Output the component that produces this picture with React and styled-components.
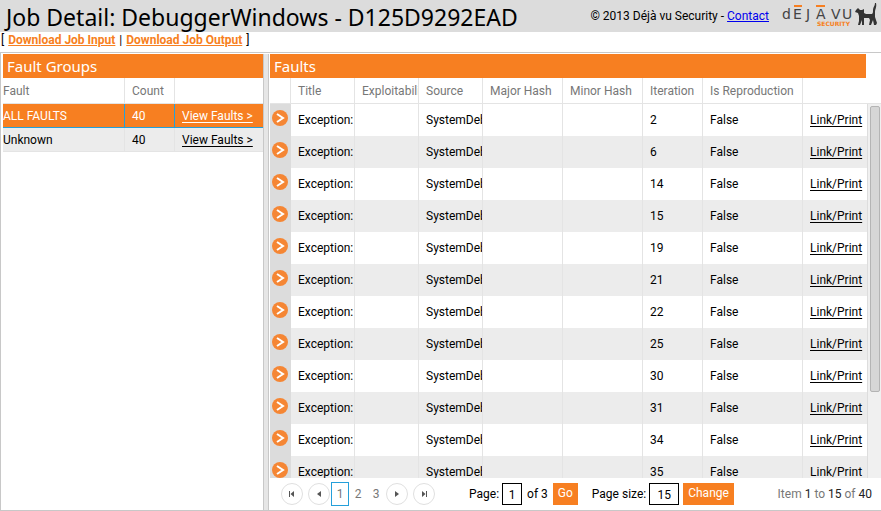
import React from "react";
import styled, { createGlobalStyle, css } from "styled-components";

const Global = createGlobalStyle`
  * { box-sizing: border-box; }
  body { margin: 0; background: #fff; color: #000; font: 12px/16px Roboto, "Open Sans", sans-serif; }
  button, input { font: inherit; }
`;
const orange = "#f77f21";
const display = `"Noto Sans", "Open Sans", sans-serif`;

const Page = styled.div`display: flex; flex-direction: column; height: 100vh; overflow: hidden;`;
const Header = styled.header`
  display: flex; align-items: center; justify-content: space-between;
  flex: none; height: 32px; padding: 0 4px 0 6px; background: #dcdcdc; white-space: nowrap;
`;
const Heading = styled.h1`margin: 0; padding-top: 2px; font-family: ${display}; font-size: 23px; line-height: 30px; font-weight: 400;`;
const Brand = styled.div`display: flex; align-items: center; gap: 12px;`;
const Contact = styled.a`color: #00e;`;
const Downloads = styled.nav`flex: none; height: 20px; padding: 0 1px; line-height: 16px;`;
const Download = styled.a`color: ${orange}; font-weight: 700; margin: 0 1px;`;
const Split = styled.main`
  display: flex; flex: 1; min-height: 0; border: 1px solid #c8c8c8; border-width: 1px 0 1px 1px; padding: 1px 0 0 2px;
`;
const Groups = styled.section`flex: none; width: 260px;`;
const Bar = styled.div`flex: none; width: 6px; background: #e6e6e6; border: 1px solid #c8c8c8; border-width: 0 1px;`;
const Faults = styled.section`display: flex; flex-direction: column; flex: 1; min-width: 0; padding-left: 1px;`;
const PanelTitle = styled.h2`
  flex: none; margin: 0 ${p => p.$inset || 0}px 0 0; padding: 0 4px; height: 24px;
  background: ${orange}; color: #fff; font-family: ${display}; font-size: 15px; line-height: 24px; font-weight: 400;
`;
const Table = styled.table`
  width: 100%; table-layout: fixed; border-collapse: separate; border-spacing: 0;
  th, td { overflow: hidden; white-space: nowrap; text-align: left; font-weight: 400; border-right: 1px solid #e4e4e4; padding: 0 0 0 7px; }
  th { height: 26px; color: #777; border-bottom: 1px solid #e4e4e4; }
  th:last-child, td:last-child { border-right: 0; }
`;
const GroupTable = styled(Table)`
  th:first-child, td:first-child { padding-left: 0; }
`;
const GroupRow = styled.tr`
  td { height: 24px; background: #ececec; border-bottom: 1px solid #e4e4e4; }
  ${p => p.$selected && css`td { background: ${orange}; color: #fff; border-color: #25a0da; }`}
`;
const FaultRow = styled.tr`
  background: ${p => (p.$alt ? "#ececec" : "#fff")};
  td { height: 32px; }
  td:first-child { background: #dcdcdc; padding: 0 0 0 2px; border-right: 0; }
`;
const RowLink = styled.a`color: inherit; text-underline-offset: 2px;`;
const Expand = styled.button`display: block; width: 16px; height: 16px; margin-bottom: 4px; padding: 0; border: 0; background: none;`;
const Scroller = styled.div`display: flex; flex: 1; min-height: 0; overflow: hidden;`;
const Rows = styled.div`flex: 1; min-width: 0;`;
const Track = styled.div`flex: none; width: 14px; padding: 2px 1px 0 2px; background: #f0f0f0; border-left: 1px solid #ddd;`;
const Thumb = styled.div`height: 77%; background: #d6d6d6; border: 1px solid #b4b4b4; border-radius: 2px;`;
const Pager = styled.footer`
  display: flex; align-items: center; gap: 34px; flex: none; height: 32px;
  padding: 0 9px 0 11px; white-space: nowrap;
`;
const Cluster = styled.div`display: flex; align-items: center; gap: ${p => p.$gap || 0}px;`;
const Round = styled.button`
  display: grid; place-items: center; width: 22px; height: 22px; padding: 0;
  border: 1px solid #e0e0e0; border-radius: 50%; background: #fff;
`;
const PageLink = styled.button`
  width: 18px; height: 24px; padding: 0; background: #fff; color: #777;
  border: 1px solid ${p => (p.$current ? "#25a0da" : "transparent")};
`;
const Field = styled.label`display: flex; align-items: center; gap: 3px;`;
const Box = styled.input`
  width: ${p => p.$w}px; height: 22px; padding: 2px 0 0; border: 1px solid #000; border-radius: 0;
  background: #fff; color: #000; text-align: center; outline: 0;
`;
const Action = styled.button`height: 22px; padding: 0 5px 2px; border: 0; background: ${orange}; color: #fff;`;
const Summary = styled.div`margin-left: auto; color: #777; b { color: #222; font-weight: 400; }`;

const Logo = () => (
  <svg width="96" height="28" viewBox="0 0 96 28" role="img" aria-label="Déjà vu Security">
    <text y="17" x="1 12 25 35 50 61" fill="#444" fontFamily="DejaVu Sans" fontSize="14">dEJAVU</text>
    <path d="M13 4h8M35 4h9" stroke={orange} strokeWidth="2" />
    <text y="24" x="36" fill={orange} fontFamily="DejaVu Sans" fontWeight="700" fontSize="6">SECURITY</text>
    <path fill="#333" d="M77 6l2 2h2l2-1v4l2 1h6c1-1 1-2 1-4 0-3 2-4 2-7h1c1 4-1 6-1 9v5l2 6-1 2h-2l-1-5-2 5h-2l1-5-1-2h-5v7h-2v-5l-2 5h-2l1-4v-5l-1-3-3-1 1-2z" />
  </svg>
);
const Arrow = () => (
  <svg width="16" height="16" viewBox="0 0 16 16"><circle cx="8" cy="8" r="8" fill="#f58634" /><path d="M5 4l6 4-6 4" fill="none" stroke="#fff" strokeWidth="2" /></svg>
);
const marks = {
  first: "M3 3h1v6H3zM8 3v6L4.500 6z", prev: "M8 3v6L4 6z", next: "M4 3v6l4-3z", last: "M4 3v6l3.500-3zM8 3h1v6H8z",
};
const Nav = ({ kind, label }) => (
  <Round aria-label={label}><svg width="12" height="12" viewBox="0 0 12 12"><path fill="#555" d={marks[kind]} /></svg></Round>
);
const Cols = ({ widths }) => <colgroup>{widths.map((w, i) => <col key={i} style={{ width: w }} />)}</colgroup>;

const faultCols = [21, 64, 64, 64, 80, 80, 60, 100, undefined];
const headers = ["", "Title", "Exploitability", "Source", "Major Hash", "Minor Hash", "Iteration", "Is Reproduction", ""];
const iterations = [2, 6, 14, 15, 19, 21, 22, 25, 30, 31, 34, 35];

export default function App() {
  return (
    <Page>
      <Global />
      <Header>
        <Heading>Job Detail: DebuggerWindows - D125D9292EAD</Heading>
        <Brand><span>© 2013 Déjà vu Security - <Contact href="#contact">Contact</Contact></span><Logo /></Brand>
      </Header>
      <Downloads>[ <Download href="#input">Download Job Input</Download> | <Download href="#output">Download Job Output</Download> ]</Downloads>
      <Split>
        <Groups>
          <PanelTitle>Fault Groups</PanelTitle>
          <GroupTable>
            <Cols widths={[122, 50, undefined]} />
            <thead><tr><th>Fault</th><th>Count</th><th /></tr></thead>
            <tbody>
              {["ALL FAULTS", "Unknown"].map((name, i) => (
                <GroupRow key={name} $selected={i === 0}><td>{name}</td><td>40</td><td><RowLink href="#faults">View Faults &gt;</RowLink></td></GroupRow>
              ))}
            </tbody>
          </GroupTable>
        </Groups>
        <Bar />
        <Faults>
          <PanelTitle $inset={15}>Faults</PanelTitle>
          <Table>
            <Cols widths={faultCols} />
            <thead><tr>{headers.map((h, i) => <th key={i}>{h}</th>)}</tr></thead>
          </Table>
          <Scroller>
            <Rows>
              <Table>
                <Cols widths={faultCols} />
                <tbody>
                  {iterations.map((n, i) => (
                    <FaultRow key={n} $alt={i % 2 === 1}>
                      <td><Expand aria-label="Expand fault"><Arrow /></Expand></td>
                      <td>Exception:</td><td /><td>SystemDebugger</td><td /><td /><td>{n}</td><td>False</td>
                      <td><RowLink href="#fault">Link/Print</RowLink></td>
                    </FaultRow>
                  ))}
                </tbody>
              </Table>
            </Rows>
            <Track><Thumb /></Track>
          </Scroller>
          <Pager>
            <Cluster $gap={1}>
              <Cluster $gap={5}><Nav kind="first" label="First page" /><Nav kind="prev" label="Previous page" /></Cluster>
              <Cluster><PageLink $current>1</PageLink><PageLink>2</PageLink><PageLink>3</PageLink></Cluster>
              <Cluster $gap={5}><Nav kind="next" label="Next page" /><Nav kind="last" label="Last page" /></Cluster>
            </Cluster>
            <Cluster $gap={14}>
              <Cluster $gap={5}><Field>Page: <Box $w={20} defaultValue="1" /></Field><span>of 3</span><Action>Go</Action></Cluster>
              <Cluster $gap={4}><Field>Page size: <Box $w={30} defaultValue="15" /></Field><Action>Change</Action></Cluster>
            </Cluster>
            <Summary>Item <b>1</b> to <b>15</b> of <b>40</b></Summary>
          </Pager>
        </Faults>
      </Split>
    </Page>
  );
}
